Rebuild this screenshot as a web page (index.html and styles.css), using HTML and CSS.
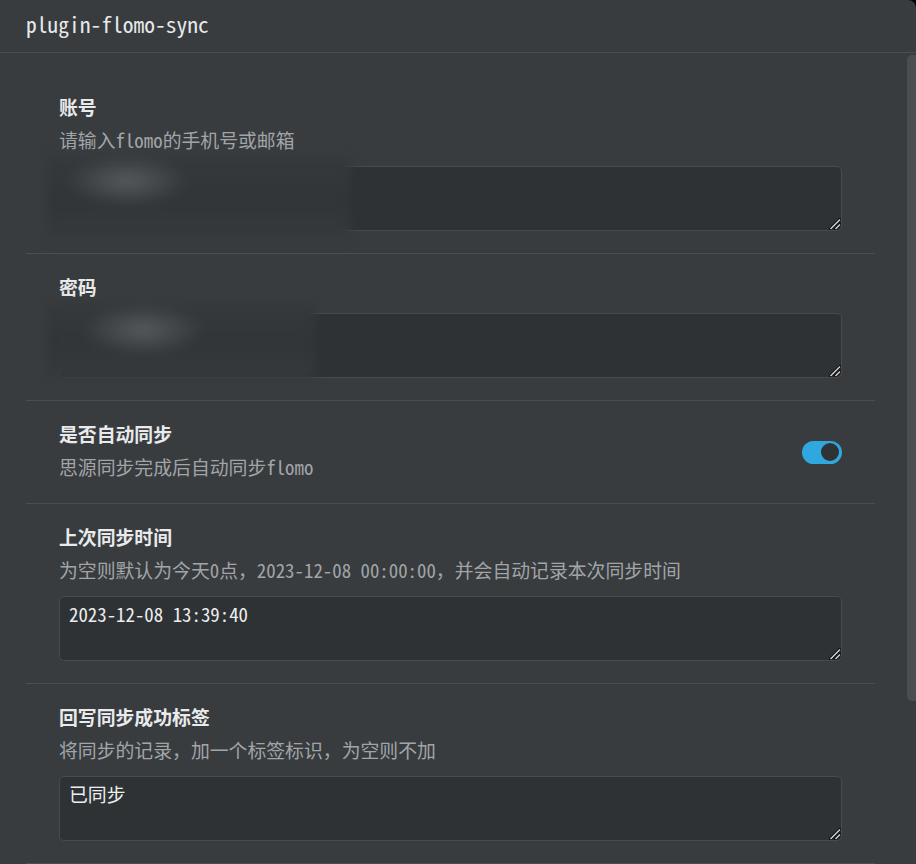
FILE: index.html
```html
<!DOCTYPE html>
<html lang="zh-CN">
<head>
<meta charset="utf-8">
<title>plugin-flomo-sync</title>
<link rel="stylesheet" href="styles.css">
</head>
<body>
<div class="dialog">
  <div class="header"><span class="title">plugin-flomo-sync</span></div>
  <div class="body">
    <div class="content">
      <div class="item">
        <div class="label">账号</div>
        <div class="desc">请输入flomo的手机号或邮箱</div>
        <div class="field">
          <textarea class="input" spellcheck="false"></textarea>
          <svg class="grip" width="12" height="12" viewBox="0 0 12 12"><path d="M1.5 11 L11 1.5 M6.5 11 L11 6.5" stroke="#111" stroke-width="3.2" stroke-linecap="square"/><path d="M1.5 11 L11 1.5 M6.5 11 L11 6.5" stroke="#d0d2d4" stroke-width="1.5"/></svg>
          <div class="redact redact-a"></div>
        </div>
      </div>
      <div class="item">
        <div class="label">密码</div>
        <div class="field">
          <textarea class="input" spellcheck="false"></textarea>
          <svg class="grip" width="12" height="12" viewBox="0 0 12 12"><path d="M1.5 11 L11 1.5 M6.5 11 L11 6.5" stroke="#111" stroke-width="3.2" stroke-linecap="square"/><path d="M1.5 11 L11 1.5 M6.5 11 L11 6.5" stroke="#d0d2d4" stroke-width="1.5"/></svg>
          <div class="redact redact-b"></div>
        </div>
      </div>
      <div class="item item-row">
        <div class="item-text">
          <div class="label">是否自动同步</div>
          <div class="desc">思源同步完成后自动同步flomo</div>
        </div>
        <div class="switch"><span class="knob"></span></div>
      </div>
      <div class="item">
        <div class="label">上次同步时间</div>
        <div class="desc">为空则默认为今天0点，2023-12-08 00:00:00，并会自动记录本次同步时间</div>
        <div class="field">
          <textarea class="input" spellcheck="false">2023-12-08 13:39:40</textarea>
          <svg class="grip" width="12" height="12" viewBox="0 0 12 12"><path d="M1.5 11 L11 1.5 M6.5 11 L11 6.5" stroke="#111" stroke-width="3.2" stroke-linecap="square"/><path d="M1.5 11 L11 1.5 M6.5 11 L11 6.5" stroke="#d0d2d4" stroke-width="1.5"/></svg>
        </div>
      </div>
      <div class="item">
        <div class="label">回写同步成功标签</div>
        <div class="desc">将同步的记录，加一个标签标识，为空则不加</div>
        <div class="field">
          <textarea class="input" spellcheck="false">已同步</textarea>
          <svg class="grip" width="12" height="12" viewBox="0 0 12 12"><path d="M1.5 11 L11 1.5 M6.5 11 L11 6.5" stroke="#111" stroke-width="3.2" stroke-linecap="square"/><path d="M1.5 11 L11 1.5 M6.5 11 L11 6.5" stroke="#d0d2d4" stroke-width="1.5"/></svg>
        </div>
      </div>
    </div>
    <div class="scrollbar"><div class="thumb"></div></div>
  </div>
</div>
</body>
</html>
```

FILE: styles.css
```css
html, body {
  margin: 0;
  padding: 0;
  background: #000;
}

.dialog {
  width: 916px;
  height: 864px;
  background: #383c3f;
  border-top-right-radius: 8px;
  overflow: hidden;
  color: #e6e7e8;
  font-family: "Noto Sans Mono CJK SC", "DejaVu Sans Mono", "Noto Sans CJK SC", monospace;
  color-scheme: dark;
}

.header {
  height: 52px;
  border-bottom: 1px solid #4a4e51;
  display: flex;
  align-items: center;
  padding-left: 26px;
}

.title {
  font-size: 21.5px;
  line-height: 28px;
  margin-top: -4px;
  color: #e8e9ea;
}

.body {
  display: flex;
  height: 811px;
}

.content {
  flex: 1;
  padding: 21px 32px 0 26px;
}

.item {
  padding: 21px 33px 22px;
  border-bottom: 1px solid #4a4e51;
}

.item-row {
  display: flex;
  align-items: center;
  justify-content: space-between;
  padding-bottom: 24px;
}

.label {
  font-size: 18.85px;
  line-height: 24px;
  font-weight: 700;
  color: #e9eaeb;
}

.desc {
  font-size: 18.85px;
  line-height: 24px;
  margin-top: 9px;
  color: #a2a5a8;
}

.field {
  position: relative;
  margin-top: 14px;
}

.input {
  display: block;
  box-sizing: border-box;
  width: 100%;
  height: 65px;
  margin: 0;
  padding: 5px 9px;
  background: #2e3235;
  border: 1px solid #474b4e;
  border-radius: 5px;
  color: #eceded;
  font-family: inherit;
  font-size: 18.85px;
  line-height: 24px;
  outline: none;
  resize: none;
}

.grip {
  position: absolute;
  right: 1px;
  bottom: 1px;
}

.redact {
  position: absolute;
  filter: blur(5px);
}

.redact-a {
  left: -12px;
  top: -10px;
  width: 303px;
  height: 83px;
  background:
    radial-gradient(ellipse 62px 26px at 80px 25px, rgba(88,91,94,0.95), rgba(88,91,94,0) 100%),
    linear-gradient(#36393c, #313538 55%, #363a3d);
}

.redact-b {
  left: -12px;
  top: -10px;
  width: 268px;
  height: 75px;
  background:
    radial-gradient(ellipse 62px 26px at 96px 27px, rgba(88,91,94,0.95), rgba(88,91,94,0) 100%),
    linear-gradient(#36393c, #313538 55%, #363a3d);
}

.switch {
  width: 40px;
  height: 23px;
  border-radius: 12px;
  background: #2ea8de;
  display: flex;
  align-items: center;
  justify-content: flex-end;
  padding-right: 3px;
  box-sizing: border-box;
  margin-top: 3px;
}

.knob {
  width: 18px;
  height: 18px;
  border-radius: 50%;
  background: #2f3336;
}

.scrollbar {
  width: 9px;
  padding-top: 2px;
}

.thumb {
  height: 646px;
  background: #4a4e52;
  border-radius: 5px 0 0 5px;
}
```
